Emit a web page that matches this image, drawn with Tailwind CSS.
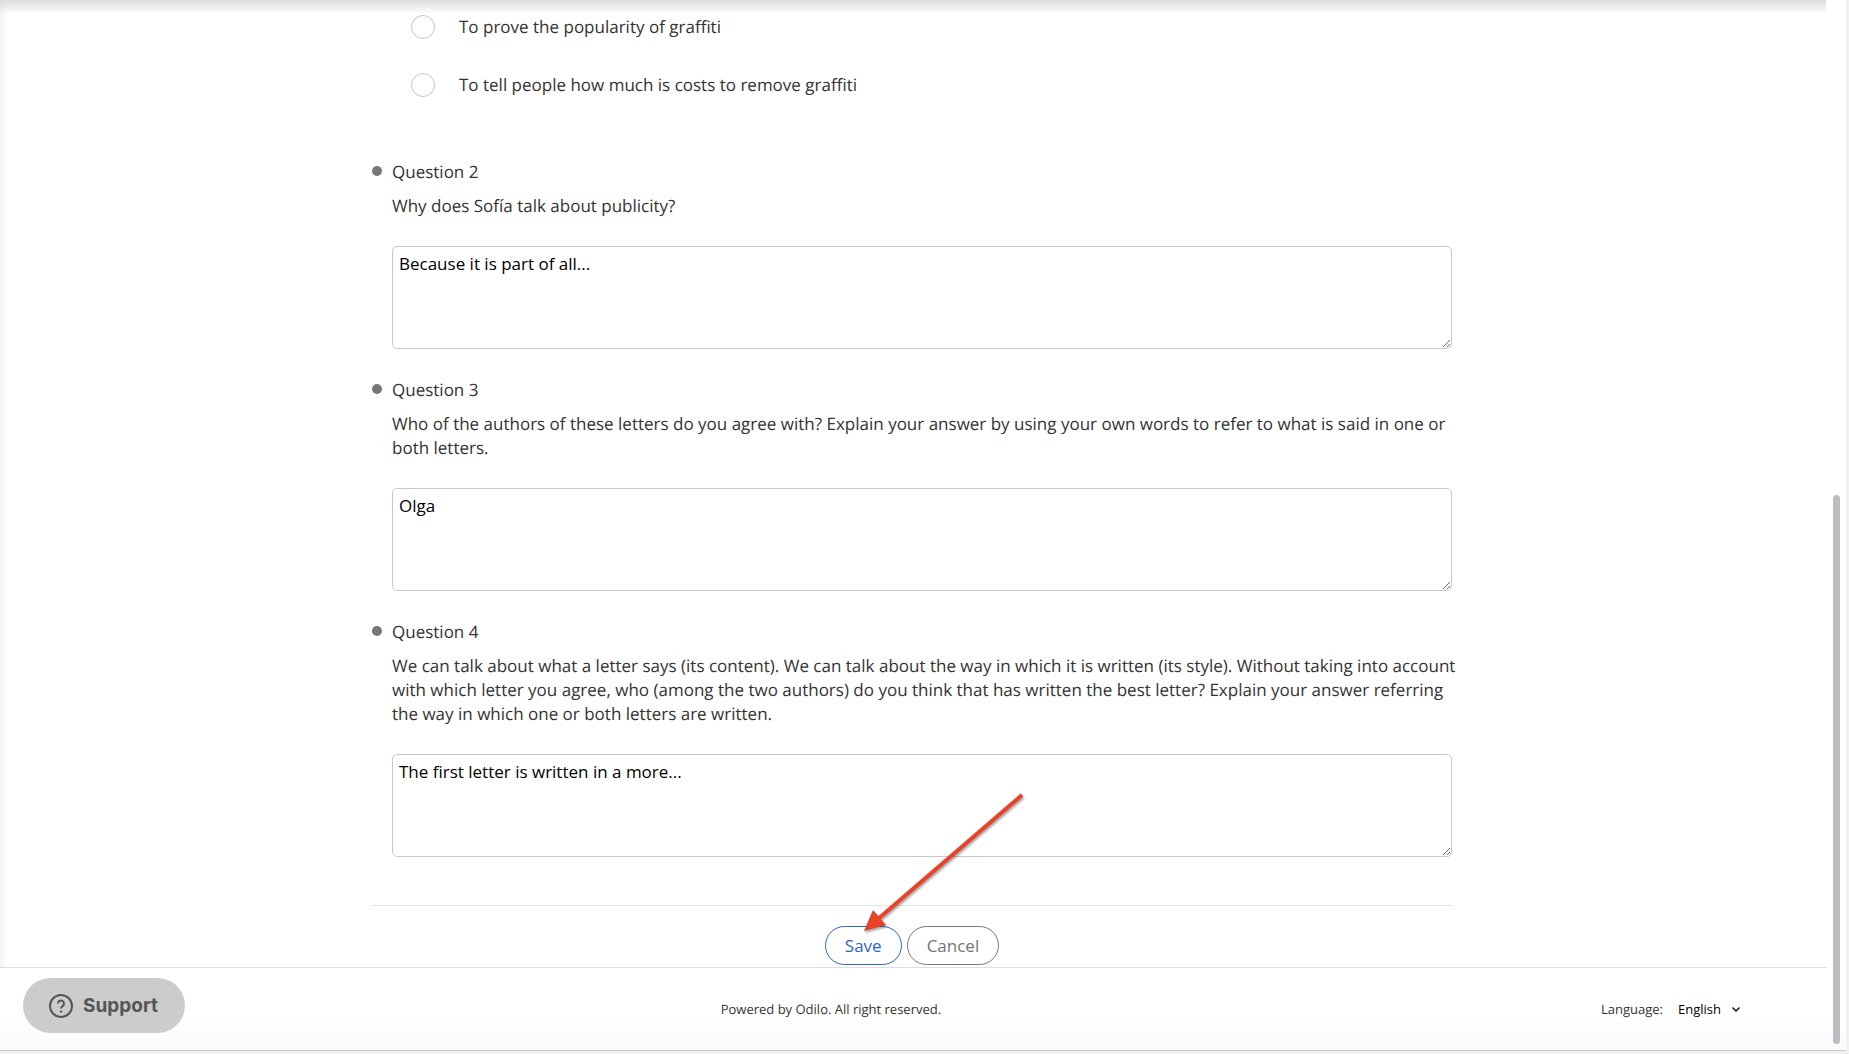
<!DOCTYPE html>
<html lang="en">
<head>
<meta charset="utf-8">
<meta name="viewport" content="width=device-width, initial-scale=1">
<title>Questionnaire</title>
<script src="https://cdn.jsdelivr.net/npm/@tailwindcss/browser@4"></script>
</head>
<body class="relative flex min-h-screen flex-col bg-[#f1f1f1] pr-[3px] font-['Open_Sans',sans-serif] text-[17px] leading-6 text-[#333] [text-rendering:geometricPrecision]">
  <div class="relative flex grow flex-col border-b border-[#cbcbcb] bg-white">
    <div class="pointer-events-none absolute top-0 left-0 h-[14px] w-full pr-5"><div class="h-full bg-linear-to-b from-[#dcdcdc] to-white/0"></div></div>
    <main class="grow bg-linear-to-r from-[#f3f3f3] to-white to-[8px] pr-[22px]">
      <form class="mx-auto flex max-w-[1080px] flex-col pt-[15px]">
        <fieldset class="ml-[39px] flex flex-col gap-[34px]">
          <label class="flex items-center gap-6"><input type="radio" name="q1" class="size-6 appearance-none rounded-full border border-[#c4c4c4] bg-white">To prove the popularity of graffiti</label>
          <label class="flex items-center gap-6"><input type="radio" name="q1" class="size-6 appearance-none rounded-full border border-[#c4c4c4] bg-white">To tell people how much is costs to remove graffiti</label>
        </fieldset>
        <ul class="mt-[63px] flex flex-col gap-[29px]">
          <li class="flex gap-[10px]">
            <span class="mt-[6px] size-[10px] shrink-0 rounded-full bg-[#777]"></span>
            <div class="grow">
              <h2>Question 2</h2>
              <label for="q2" class="mt-[10px] -mr-3 block">Why does Sofía talk about publicity?</label>
              <textarea id="q2" class="mt-7 block h-[103px] w-full rounded-[5px] border border-[#c8c8c8] bg-white px-[6px] py-[5px] text-black">Because it is part of all...</textarea>
            </div>
          </li>
          <li class="flex gap-[10px]">
            <span class="mt-[6px] size-[10px] shrink-0 rounded-full bg-[#777]"></span>
            <div class="grow">
              <h2>Question 3</h2>
              <label for="q3" class="mt-[10px] -mr-3 block">Who of the authors of these letters do you agree with? Explain your answer by using your own words to refer to what is said in one or both letters.</label>
              <textarea id="q3" class="mt-7 block h-[103px] w-full rounded-[5px] border border-[#c8c8c8] bg-white px-[6px] py-[5px] text-black">Olga</textarea>
            </div>
          </li>
          <li class="flex gap-[10px]">
            <span class="mt-[6px] size-[10px] shrink-0 rounded-full bg-[#777]"></span>
            <div class="grow">
              <h2>Question 4</h2>
              <label for="q4" class="mt-[10px] -mr-3 block">We can talk about what a letter says (its content). We can talk about the way in which it is written (its style). Without taking into account with which letter you agree, who (among the two authors) do you think that has written the best letter? Explain your answer referring the way in which one or both letters are written.</label>
              <textarea id="q4" class="mt-7 block h-[103px] w-full rounded-[5px] border border-[#c8c8c8] bg-white px-[6px] py-[5px] text-black">The first letter is written in a more...</textarea>
            </div>
          </li>
        </ul>
        <div class="mt-12 flex justify-center gap-[5px] border-t border-[#e3e3e3] pt-5 pb-[2px]">
          <div class="relative">
            <button type="button" class="h-[39px] rounded-full border border-[#2a67c4] bg-white px-[19px] text-[#2a67c4]">Save</button>
            <!-- arrow pointing at the Save button -->
            <svg class="pointer-events-none absolute -top-[136px] left-[31px] h-[150px] w-[180px] drop-shadow-[1px_2px_1px_rgba(0,0,0,0.35)]" viewBox="0 0 180 150" aria-hidden="true">
              <path d="M166 5 L22 129" stroke="#e94226" stroke-width="4" fill="none"/>
              <path d="M8 141 L17 120 L23 127 L30 135 Z" fill="#e94226"/>
            </svg>
          </div>
          <button type="button" class="h-[39px] rounded-full border border-[#777] bg-white px-[19px] text-[#757575]">Cancel</button>
        </div>
      </form>
    </main>
    <footer class="bg-linear-to-b from-white from-60% to-[#fafafa] pr-5 text-[13px]">
      <div class="-mr-px flex h-[83px] items-center border-t border-[#ddd] pr-[87px] pl-[23px]">
        <button type="button" class="mt-[-7px] flex h-[55px] w-[162px] items-center gap-[10px] rounded-full bg-[#ccc] pl-[26px] font-['Inter',sans-serif] text-[19px] font-bold text-[#555]">
          <svg class="size-6" viewBox="0 0 24 24" fill="none" stroke="#555" stroke-width="2" aria-hidden="true">
            <circle cx="12" cy="12" r="11"/>
            <path d="M9 9.500a3 3 0 1 1 4.800 2.400c-1.200.8-1.800 1.300-1.800 2.700"/>
            <circle cx="12" cy="17.600" r="1.200" fill="#555" stroke="none"/>
          </svg>
          Support
        </button>
        <p class="ml-[31.2%]">Powered by Odilo. All right reserved.</p>
        <div class="ml-auto flex items-center">
          <label for="lang" class="mr-[15px]">Language:</label>
          <span class="relative flex items-center">
            <select id="lang" class="w-[62px] appearance-none bg-transparent text-black"><option>English</option></select>
            <svg class="pointer-events-none absolute right-0 h-2 w-2" viewBox="0 0 8 8" fill="none" stroke="#111" stroke-width="1.500" aria-hidden="true"><path d="M.5 2.500 4 6l3.500-3.500"/></svg>
          </span>
        </div>
      </div>
    </footer>
    <div class="absolute right-[6px] bottom-[6px] h-[52.300%] w-[7px] rounded-full bg-[#bdbcc2]"></div>
  </div>
  <div class="h-[3px]"></div>
</body>
</html>
